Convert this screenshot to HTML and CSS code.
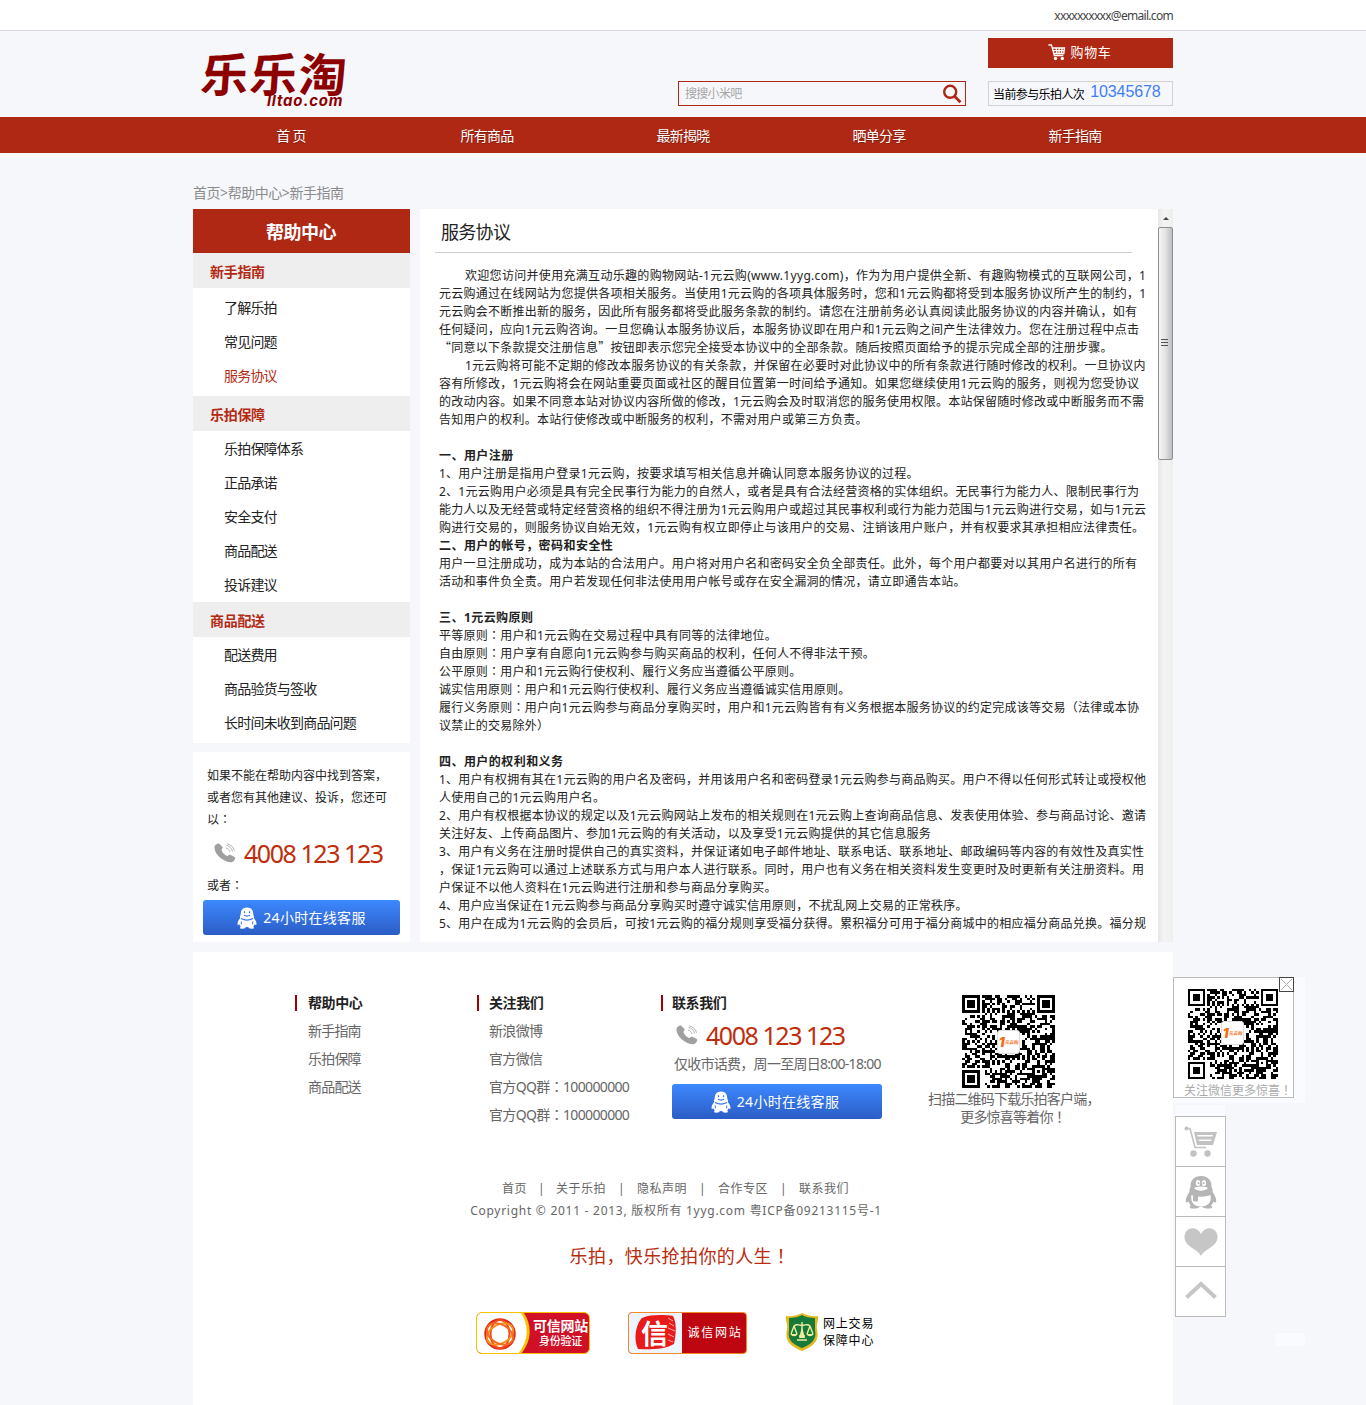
FILE: index.html
```html
<!DOCTYPE html>
<html lang="zh-CN">
<head>
<meta charset="utf-8">
<title>乐乐淘 - 服务协议</title>
<link rel="stylesheet" href="styles.css">
</head>
<body>
<svg class="defs" width="0" height="0" aria-hidden="true">
  <symbol id="qq" viewBox="0 0 32 34">
    <path fill="currentColor" d="M16 1C9 1 5.500 5.500 5.500 11c0 1.500-.8 2.500-1.200 4L4.500 17c-2.500 3-3.700 6.500-3.700 9 0 2 1.400 2 2.700.5C4 28 5 29.500 6 30.500c-2 1-2 3 2 3 4 0 6-.8 7-1.800h2c1 1 3 1.800 7 1.800s4-2 2-3c1-1 2-2.500 2.500-4 1.300 1.500 2.700 1.500 2.700-.5 0-2.500-1.200-6-3.700-9l.2-2c-.4-1.500-1.200-2.500-1.200-4C26.500 5.500 23 1 16 1z"/>
    <g class="qq-hole"><path d="M6.500 20c5 2.300 14 2.300 19 0 1.500 7-2.500 11.500-9.500 11.500S5 27 6.500 20z"/><ellipse cx="13" cy="8" rx="2.200" ry="3"/><ellipse cx="19" cy="8" rx="2.200" ry="3"/><path d="M9 13c4-2 10-2 14 0-3 3.500-11 3.500-14 0z"/></g>
    <path fill="currentColor" d="M8 20l5 1v5c-2 .8-4 .5-5 0z"/><circle cx="13.500" cy="8.300" r="1" fill="currentColor"/><circle cx="18.500" cy="8.300" r="1" fill="currentColor"/>
  </symbol>
  <symbol id="qq-white" viewBox="0 0 20 22">
    <path fill="#fff" d="M10 .5C6 .5 3.800 3.300 3.800 6.800c0 1.200-.6 1.800-.8 3L3.200 11C1.500 12.800.5 15 .5 17c0 1.300 1 1.200 1.800.3.300 1 .8 1.800 1.500 2.400-1.300.8-1 2 1.400 2 2.300 0 3.500-.5 4-1.200h1.600c.5.700 1.700 1.200 4 1.200 2.400 0 2.700-1.200 1.400-2 .7-.6 1.200-1.400 1.500-2.400.8.900 1.800 1 1.800-.3 0-2-1-4.200-2.700-6l.2-1.200c-.2-1.200-.8-1.800-.8-3C16.200 3.300 14 .5 10 .5z"/>
    <path d="M4 11.500c3.500 1.800 8.500 1.800 12 0M7.500 4.200v2M12.500 4.200v2M7 8.300c2 1 4 1 6 0" fill="none" stroke="#3a78e6" stroke-width="1.200"/>
    <path d="M4.300 14.500v3M15.700 14.500v3M8.500 20.500h3" stroke="#3a78e6" stroke-width="1"/>
  </symbol>
  <symbol id="phone" viewBox="0 0 22 20">
    <path fill="#a0a0a0" d="M.5 3.500C1.500 1.500 4 0 5.300.7L8.500 4c.8 1-1.300 2.500-1 3.300.8 2.500 3.500 5 5.500 5.700 1 .3 2.300-1.800 3.300-1.300l4.700 2.600c.8.700-.7 4-2.700 4.700C12 20.500-.5 12 .5 3.500z"/>
    <g fill="none" stroke="#b4b4b4"><path d="M12 5c2 .5 3.500 2 4 4"/><path d="M12.500 2.500c3 .5 5.300 2.500 6 6"/><path d="M13 .8c4 1 6.500 3 7.500 7"/></g>
  </symbol>
</svg>

<div class="topbar"><div class="wrap topbar-in">xxxxxxxxxx@email.com</div></div>

<header class="wrap header">
  <div class="logo"><span class="logo-cn">乐乐淘</span><span class="logo-en">lltao.com</span></div>
  <div class="search"><span>搜搜小米吧</span>
    <svg width="20" height="20" viewBox="0 0 20 20" fill="none" stroke="#ae2813"><circle cx="8.200" cy="7.800" r="6" stroke-width="2.400"/><path d="M12.500 12.200l6 6" stroke-width="2.800"/></svg>
  </div>
  <div class="head-right">
    <a class="cart"><svg width="18" height="17" viewBox="0 0 18 17"><path d="M.5 1h3l2.800 10.500h9M4.500 4h12L15.800 9.500H6M8 4l1 5.500M11 4v5.500M14 4l-.5 5.500M5 6.700h11" fill="none" stroke="#fff" stroke-width="1.300"/><circle cx="7.500" cy="14.500" r="1.700" fill="#fff"/><circle cx="14.300" cy="14.500" r="1.700" fill="#fff"/></svg>购物车</a>
    <div class="count"><span>当前参与乐拍人次</span><b>10345678</b></div>
  </div>
</header>

<nav class="nav"><div class="wrap nav-in"><a>首 页</a><a>所有商品</a><a>最新揭晓</a><a>晒单分享</a><a>新手指南</a></div></nav>

<div class="wrap crumb">首页&gt;帮助中心&gt;新手指南</div>

<div class="wrap content">
  <aside class="side">
    <div class="menu">
      <h2>帮助中心</h2>
      <h3>新手指南</h3>
      <ul class="first"><li>了解乐拍</li><li>常见问题</li><li class="on">服务协议</li></ul>
      <h3>乐拍保障</h3>
      <ul><li>乐拍保障体系</li><li>正品承诺</li><li>安全支付</li><li>商品配送</li><li>投诉建议</li></ul>
      <h3>商品配送</h3>
      <ul><li>配送费用</li><li>商品验货与签收</li><li>长时间未收到商品问题</li></ul>
    </div>
    <div class="help">
      <p>如果不能在帮助内容中找到答案，<br>或者您有其他建议、投诉，您还可<br>以<span class="mid">：</span></p>
      <div class="tel"><svg width="22" height="20"><use href="#phone"/></svg>4008 123 123</div>
      <p class="or">或者<span class="mid">：</span></p>
      <a class="service"><svg width="20" height="22"><use href="#qq-white"/></svg>24小时在线客服</a>
    </div>
  </aside>
  <main class="main">
    <article class="doc">
      <h1>服务协议</h1>
      <div class="text">
        <p class="ind open">欢迎您访问并使用充满互动乐趣的购物网站-1元云购(www.1yyg.com)，作为为用户提供全新、有趣购物模式的互联网公司，1</p>
        <p>元云购通过在线网站为您提供各项相关服务。当使用1元云购的各项具体服务时，您和1元云购都将受到本服务协议所产生的制约，1</p>
        <p>元云购会不断推出新的服务，因此所有服务都将受此服务条款的制约。请您在注册前务必认真阅读此服务协议的内容并确认，如有</p>
        <p>任何疑问，应向1元云购咨询。一旦您确认本服务协议后，本服务协议即在用户和1元云购之间产生法律效力。您在注册过程中点击</p>
        <p><span class="cjk">“</span>同意以下条款提交注册信息<span class="cjk">”</span>按钮即表示您完全接受本协议中的全部条款。随后按照页面给予的提示完成全部的注册步骤。</p>
        <p class="ind">1元云购将可能不定期的修改本服务协议的有关条款，并保留在必要时对此协议中的所有条款进行随时修改的权利。一旦协议内</p>
        <p>容有所修改，1元云购将会在网站重要页面或社区的醒目位置第一时间给予通知。如果您继续使用1元云购的服务，则视为您受协议</p>
        <p>的改动内容。如果不同意本站对协议内容所做的修改，1元云购会及时取消您的服务使用权限。本站保留随时修改或中断服务而不需</p>
        <p>告知用户的权利。本站行使修改或中断服务的权利，不需对用户或第三方负责。</p>
        <p class="gap"></p>
        <h4>一、用户注册</h4>
        <p>1、用户注册是指用户登录1元云购，按要求填写相关信息并确认同意本服务协议的过程。</p>
        <p>2、1元云购用户必须是具有完全民事行为能力的自然人，或者是具有合法经营资格的实体组织。无民事行为能力人、限制民事行为</p>
        <p>能力人以及无经营或特定经营资格的组织不得注册为1元云购用户或超过其民事权利或行为能力范围与1元云购进行交易，如与1元云</p>
        <p>购进行交易的，则服务协议自始无效，1元云购有权立即停止与该用户的交易、注销该用户账户，并有权要求其承担相应法律责任。</p>
        <h4>二、用户的帐号，密码和安全性</h4>
        <p>用户一旦注册成功，成为本站的合法用户。用户将对用户名和密码安全负全部责任。此外，每个用户都要对以其用户名进行的所有</p>
        <p>活动和事件负全责。用户若发现任何非法使用用户帐号或存在安全漏洞的情况，请立即通告本站。</p>
        <p class="gap"></p>
        <h4>三、1元云购原则</h4>
        <p>平等原则<span class="mid">：</span>用户和1元云购在交易过程中具有同等的法律地位。</p>
        <p>自由原则<span class="mid">：</span>用户享有自愿向1元云购参与购买商品的权利，任何人不得非法干预。</p>
        <p>公平原则<span class="mid">：</span>用户和1元云购行使权利、履行义务应当遵循公平原则。</p>
        <p>诚实信用原则<span class="mid">：</span>用户和1元云购行使权利、履行义务应当遵循诚实信用原则。</p>
        <p>履行义务原则<span class="mid">：</span>用户向1元云购参与商品分享购买时，用户和1元云购皆有有义务根据本服务协议的约定完成该等交易<span class="mid">（</span>法律或本协</p>
        <p>议禁止的交易除外<span class="mid">）</span></p>
        <p class="gap"></p>
        <h4>四、用户的权利和义务</h4>
        <p>1、用户有权拥有其在1元云购的用户名及密码，并用该用户名和密码登录1元云购参与商品购买。用户不得以任何形式转让或授权他</p>
        <p>人使用自己的1元云购用户名。</p>
        <p>2、用户有权根据本协议的规定以及1元云购网站上发布的相关规则在1元云购上查询商品信息、发表使用体验、参与商品讨论、邀请</p>
        <p>关注好友、上传商品图片、参加1元云购的有关活动，以及享受1元云购提供的其它信息服务</p>
        <p>3、用户有义务在注册时提供自己的真实资料，并保证诸如电子邮件地址、联系电话、联系地址、邮政编码等内容的有效性及真实性</p>
        <p>，保证1元云购可以通过上述联系方式与用户本人进行联系。同时，用户也有义务在相关资料发生变更时及时更新有关注册资料。用</p>
        <p>户保证不以他人资料在1元云购进行注册和参与商品分享购买。</p>
        <p>4、用户应当保证在1元云购参与商品分享购买时遵守诚实信用原则，不扰乱网上交易的正常秩序。</p>
        <p>5、用户在成为1元云购的会员后，可按1元云购的福分规则享受福分获得。累积福分可用于福分商城中的相应福分商品兑换。福分规</p>
      </div>
    </article>
    <div class="scroll"><div class="arrow"></div><div class="thumb"><i></i><i></i><i></i></div></div>
  </main>
</div>

<footer class="wrap footer">
  <div class="cols">
    <section class="c1"><h5>帮助中心</h5><p>新手指南</p><p>乐拍保障</p><p>商品配送</p></section>
    <section class="c2"><h5>关注我们</h5><p>新浪微博</p><p>官方微信</p><p>官方QQ群<span class="mid">：</span>100000000</p><p>官方QQ群<span class="mid">：</span>100000000</p></section>
    <section class="c3"><h5>联系我们</h5>
      <div class="tel"><svg width="22" height="20"><use href="#phone"/></svg>4008 123 123</div>
      <div class="hours">仅收市话费，周一至周日8:00-18:00</div>
      <a class="service"><svg width="20" height="22"><use href="#qq-white"/></svg>24小时在线客服</a>
    </section>
    <section class="c4"><div class="code"><svg class="qr" width="93" height="93" viewBox="0 0 37 37"></svg><span class="mark"><b>1</b><i>元云购</i></span></div><p>扫描二维码下载乐拍客户端，<br>更多惊喜等着你<span class="mid">！</span></p></section>
  </div>
  <div class="links"><a>首页</a><i>|</i><a>关于乐拍</a><i>|</i><a>隐私声明</a><i>|</i><a>合作专区</a><i>|</i><a>联系我们</a></div>
  <div class="copy">Copyright © 2011 - 2013, 版权所有 1yyg.com 粤ICP备09213115号-1</div>
  <div class="slogan">乐拍，快乐抢拍你的人生<span class="mid">！</span></div>
  <div class="badges">
    <div class="badge b1">
      <svg width="55" height="42" viewBox="0 0 55 42"><path d="M0 0h47c9 14 7 30-4 42H0z" fill="#f8c200"/><path d="M0 0h44c9 14 7 30-4 42H0z" fill="#fff"/><g fill="none" stroke-width="2"><circle cx="23" cy="21" r="14.500" stroke="#e22a1c" stroke-width="2.500"/><g stroke="#ef4a1b"><ellipse cx="23" cy="21" rx="9.500" ry="14"/><ellipse cx="23" cy="21" rx="9.500" ry="14" transform="rotate(60 23 21)" stroke="#f79018"/><ellipse cx="23" cy="21" rx="9.500" ry="14" transform="rotate(120 23 21)" stroke="#f26a1b"/></g></g><circle cx="23" cy="21" r="8" fill="#fff"/></svg>
      <span><b>可信网站</b><em>身份验证</em></span>
    </div>
    <div class="badge b2">
      <div class="seal"><svg width="43" height="36" viewBox="0 0 43 36"><path d="M8 3C17-1 32 0 39 1c4 8 3 18 1 28-8 5-24 6-36 5C-1 24 2 9 8 3z" fill="#e81a1a"/><path d="M34 3l5 3M35 8l5 3M34 13l7 3M34 19l6 3M34 25l5 2" stroke="#f7a9a6" fill="none"/></svg><b>信</b></div><span>诚信网站</span>
    </div>
    <div class="badge b3">
      <svg width="34" height="40" viewBox="0 0 34 40"><path d="M1 4c6 1 12-1 16-3 4 2 10 4 16 3 1 4-2 8-1 13 2 11-1 16-15 22C3 33 0 28 2 17 3 12 0 8 1 4z" fill="#e2b91e"/><path d="M4 6c5 0 10-1 13-3 3 2 8 3 13 3v12c2 9-3 14-13 18C7 32 2 27 4 18z" fill="#17793a"/><path d="M17 10v15M9 14c3-3 5 0 8-1 3 1 5-2 8 1M9 14l-3 8M9 14l3 8M25 14l-3 8M25 14l3 8M14 24h6M12 28h10" fill="none" stroke="#f0ec9b" stroke-width="1.400"/><path d="M5.500 22h7c-1 3-6 3-7 0zM21.500 22h7c-1 3-6 3-7 0zM17 15l3 11h-6z" fill="#f0ec9b"/></svg>
      <span>网上交易<br>保障中心</span>
    </div>
  </div>
</footer>

<div class="pop"><div class="pop-in">
  <div class="code small"><svg class="qr" width="90" height="90" viewBox="0 0 37 37"></svg><span class="mark"><b>1</b><i>元云购</i></span></div>
  <p>关注微信更多惊喜<span class="mid">！</span></p></div>
  <svg class="close" width="15" height="15" viewBox="0 0 15 15"><rect x=".5" y=".5" width="14" height="14" fill="#fff" stroke="#444"/><path d="M2 2l11 11M13 2L2 13" stroke="#aaa"/></svg>
</div>
<div class="tools">
  <a><svg width="34" height="32" viewBox="0 0 34 32"><path d="M2 2.500h4l5 19h11" fill="none" stroke="#c2c2c2" stroke-width="1.600"/><circle cx="2.500" cy="2.500" r="2" fill="#c2c2c2"/><path d="M10 6h23l-4 13H13zM13 9l.5 1.500h15L29 9zM14.500 13.500l.5 1.500h12l.5-1.500z" fill="#c2c2c2" fill-rule="evenodd"/><circle cx="9.500" cy="27.500" r="3.200" fill="#c2c2c2"/><circle cx="23.500" cy="27.500" r="3.200" fill="#c2c2c2"/></svg></a>
  <a><svg class="gray" width="32" height="34"><use href="#qq"/></svg></a>
  <a><svg width="34" height="28" viewBox="0 0 34 28"><path d="M17 28C14 21 .5 19 .5 9 .5-1 13-3 17 6c4-9 16.500-7 16.500 3C33.500 19 20 21 17 28z" fill="#c6c6c6"/></svg></a>
  <a><svg width="32" height="18" viewBox="0 0 32 18"><path d="M1.500 16.500L16 3l14.500 13.500" fill="none" stroke="#c6c6c6" stroke-width="4"/></svg></a>
</div>
<div class="hint"></div>
<script src="qr.js"></script>
</body>
</html>
```
FILE: styles.css
```css
* { box-sizing: border-box; }
body, h1, h2, h3, h4, h5, p, ul { margin: 0; padding: 0; }
li { list-style: none; }
i, em { font-style: normal; }
svg { display: block; flex: none; }
.defs { position: absolute; }
body { position: relative; background: #f6f7fb; color: #222; font: 14px/18px "Noto Sans", "Noto Sans CJK SC", sans-serif; height: 1405px; overflow: hidden; }
.wrap { width: 980px; margin: 0 auto; }
.cjk { font-family: "Noto Sans CJK SC", sans-serif; line-height: 1; }
.mid { font-family: "Noto Sans CJK TC", sans-serif; line-height: 1; }
.mid:lang(zh) { font-feature-settings: "locl" 0; }

.topbar { height: 31px; background: #fff; border-bottom: 1px solid #dadae4; }
.topbar-in { text-align: right; font-size: 12px; line-height: 31px; letter-spacing: -.7px; color: #444; }

.header { height: 86px; display: flex; align-items: flex-start; }
.logo { width: 485px; padding: 14px 0 0 8px; color: #8c0000; }
.logo-cn { display: block; font-size: 48px; line-height: 54px; font-weight: 700; height: 49px; transform: skewX(-4deg) scaleY(.96); transform-origin: left; font-family: "Noto Sans CJK SC", sans-serif; letter-spacing: 1px; }
.logo-en { display: block; padding-left: 66px; font: italic 700 15px/13px Inter, sans-serif; letter-spacing: .8px; }
.search { width: 288px; height: 25px; margin-top: 50px; border: 1px solid #ae2813; display: flex; justify-content: space-between; align-items: center; padding: 0 3px 0 6px; font-size: 12px; letter-spacing: -.7px; color: #a5a5a5; }
.head-right { width: 185px; margin: 7px 0 0 22px; }
.cart { display: flex; height: 30px; justify-content: center; align-items: center; gap: 5px; background: #ae2813; color: #fff; font-size: 13px; letter-spacing: .6px; padding: 0 2px 2px 0; }
.count { margin-top: 13px; height: 25px; border: 1px solid #d2d2d2; display: flex; padding-left: 4px; font-size: 12px; line-height: 25px; letter-spacing: -.6px; color: #000; }
.count b { margin-left: 6px; font: 16px/20px "Liberation Sans", sans-serif; letter-spacing: -.1px; color: #3f7efa; }

.nav { height: 36px; background: #ae2813; }
.nav-in { display: flex; color: #fff; line-height: 37px; letter-spacing: -.7px; text-shadow: 0 1px 1px rgba(0,0,0,.3); }
.nav-in a { flex: 1; text-align: center; }
.crumb { padding-top: 31px; height: 56px; letter-spacing: -.45px; color: #8b8b8b; }

.content { display: flex; justify-content: space-between; height: 733px; }
.side { width: 217px; display: flex; flex-direction: column; justify-content: space-between; }
.menu { background: #fff; height: 534px; letter-spacing: -.8px; }
.menu h2 { height: 44px; background: #ae2813; color: #fff; text-align: center; font-size: 18px; line-height: 46px; letter-spacing: -.5px; font-weight: 700; padding-right: 1px; }
.menu h3 { height: 35px; padding-left: 17px; background: #eee; color: #b32b14; font-size: 14px; line-height: 38px; letter-spacing: -.3px; }
.menu ul { padding: 1px 0 0 31px; }
.menu .first { padding: 3px 0 3px 31px; }
.menu li { line-height: 34px; height: 34px; }
.on { color: #b32b14; }
.help { height: 190px; background: #fff; padding: 13px 10px 0; }
.help p { padding-left: 4px; height: 66px; font-size: 12px; line-height: 22px; }
.help .or { height: 22px; }
.tel { display: flex; align-items: center; gap: 8px; color: #bf2e0c; font-size: 25px; letter-spacing: -1.45px; word-spacing: 0; white-space: nowrap; }
.help .tel { height: 44px; padding: 0 0 0 11px; }
.service { display: flex; align-items: center; justify-content: center; gap: 6px; height: 35px; border-radius: 3px; background: linear-gradient(#3d89ff, #2b5cc5); color: #fff; letter-spacing: .3px; }
.qq-hole { fill: #fff; }
.help .service { margin-top: 3px; }

.main { width: 753px; background: #fff; display: flex; justify-content: space-between; }
.doc { padding-left: 15px; }
.doc h1 { width: 697px; height: 44px; padding-left: 6px; border-bottom: 1px solid #ccc; font-size: 18px; line-height: 47px; font-weight: 400; letter-spacing: -.7px; }
.text { padding: 14px 0 0 4px; font-size: 12px; letter-spacing: .25px; white-space: nowrap; width: 720px; }
.text p, .text h4 { height: 18px; font-size: 12px; }
.text h4 { letter-spacing: .45px; }
.text .ind { padding-left: 26px; }
.text .open { letter-spacing: .31px; }
.scroll { width: 15px; background: linear-gradient(90deg, #e6e6e6, #f4f4f4 40%, #eee); }
.arrow { width: 0; margin: 8px 0 7px 5px; border: 3px solid transparent; border-top: 0; border-bottom-color: #444; }
.thumb { height: 233px; border: 1px solid #8e8e8e; border-radius: 2px; background: linear-gradient(90deg, #f6f6f6, #e2e2e4 50%, #bdbdc2); display: flex; flex-direction: column; justify-content: center; align-items: center; gap: 2px; padding: 0 2px 3px 0; }
.thumb i { width: 7px; height: 1px; background: #555; }

.footer { margin-top: 10px; height: 453px; background: #fff; }
.cols { display: flex; height: 223px; padding-top: 42px; color: #666; letter-spacing: -.8px; white-space: nowrap; }
.cols h5 { font-size: 14px; line-height: 18px; color: #222; letter-spacing: -.4px; position: relative; }
.cols h5::before { content: ""; position: absolute; left: -13px; top: 1px; width: 2px; height: 16px; background: #a30000; }
.cols .c2 h5::before { left: -12px; }
.cols .c3 h5::before { left: -11px; }
.cols p { margin-top: 10px; height: 18px; }
.c1 { margin-left: 115px; width: 181px; }
.c2 { width: 183px; letter-spacing: -.65px; }
.c3 { width: 210px; }
.c3 .tel { height: 32px; margin: 7px 0 0 4px; }
.hours { padding-left: 2px; height: 30px; line-height: 23px; letter-spacing: -.73px; margin-top: 1px; }
.c3 .service { margin-top: 2px; padding-right: 4px; }
.c4 { width: 170px; margin: 1px 0 0 46px; }
.code { position: relative; width: 93px; height: 93px; }
.c4 .code { margin-left: 34px; }
.qr { shape-rendering: crispEdges; }
.mark { position: absolute; left: 35px; top: 35px; width: 23px; height: 24px; border: 1px solid #ddd; border-radius: 3px; background: #fff; color: #f36b12; display: flex; align-items: center; justify-content: center; letter-spacing: 0; white-space: nowrap; }
.mark b { font: italic 900 13px/14px Inter, sans-serif; }
.mark i { font-size: 4.5px; font-weight: 700; line-height: 8px; transform: skewX(-8deg); }
.cols .c4 p { margin: 2px 0 0; height: 36px; text-align: center; }
.links { display: flex; justify-content: center; padding: 5px 15px 0 0; height: 27px; font-size: 12px; letter-spacing: .5px; color: #666; }
.links i { width: 29px; text-align: center; }
.links i:nth-of-type(n+2) { width: 31px; }
.copy { padding-right: 14px; text-align: center; font-size: 12px; letter-spacing: .73px; color: #666; }
.slogan { text-align: center; margin: 25px 6px 0 0; height: 24px; font-size: 18px; line-height: 22px; letter-spacing: .4px; color: #b92d0e; }
.badges { display: flex; margin: 43px 0 0 283px; }
.badge { height: 42px; display: flex; overflow: hidden; }
.b1 { width: 114px; border: 1px solid #f8c200; border-radius: 6px; background: #d01027; color: #fff; }
.b1 span { width: 58px; padding-top: 4px; text-align: center; white-space: nowrap; }
.b1 b { display: block; font-size: 14px; line-height: 18px; letter-spacing: -.3px; }
.b1 em { display: block; font-size: 11px; font-weight: 500; line-height: 12px; letter-spacing: -.3px; }
.b2 { width: 119px; margin-left: 38px; border: 1px solid #f58a2d; border-radius: 4px; background: #bd0610; color: #fff; }
.seal { position: relative; width: 53px; height: 40px; background: #eef4fd; padding: 2px 0 0 5px; }
.seal b { position: absolute; left: 12px; top: 7px; font-size: 27px; line-height: 27px; }
.b2 span { width: 64px; text-align: center; font-size: 12px; line-height: 40px; letter-spacing: 1.8px; padding-left: 2px; }
.b3 { margin-left: 38px; gap: 4px; color: #000; font-size: 12px; line-height: 17px; letter-spacing: .8px; }
.b3 span { padding-top: 3px; }

.pop { position: absolute; left: 1173px; top: 977px; width: 132px; height: 126px; background: #fafbfe; }
.pop-in { width: 121px; height: 121px; border: 1px solid #bbb; background: #fff; padding-top: 11px; }
.close { position: absolute; left: 106px; top: 0; }
.small { width: 90px; height: 90px; margin-left: 14px; }
.small .mark { left: 33px; top: 32px; }
.pop p { margin: 4px 0 0 10px; height: 16px; font-size: 12px; line-height: 16px; color: #aaa; white-space: nowrap; }
.tools { position: absolute; left: 1175px; top: 1116px; width: 51px; border: 1px solid #bbb; background: #fff; box-shadow: 0 -12px 0 -1px #fafbfe; }
.tools a { display: flex; height: 50px; align-items: center; justify-content: center; border-bottom: 1px solid #bbb; }
.tools a:last-child { height: 49px; border: 0; padding-bottom: 4px; }
.gray { color: #b5b5b5; }
.hint { position: absolute; left: 1275px; top: 1333px; width: 30px; height: 13px; background: #fafbfe; }
```
FILE: qr.js
```js
// Fills each .qr svg with a 37-module code: finder corners, timing lines, data field.
const N = 37;
let seed = 20131;
const rnd = () => (seed = (seed * 1103515245 + 12345) % 2147483648) / 2147483648;
const ring = (x, y, cx, cy) => Math.max(Math.abs(x - cx), Math.abs(y - cy));
let d = "";
for (let y = 0; y < N; y++) {
  for (let x = 0; x < N; x++) {
    let on = rnd() < 0.52;
    for (const [cx, cy] of [[3, 3], [N - 4, 3], [3, N - 4]]) {
      const r = ring(x, y, cx, cy);
      if (r <= 4) on = r === 3 || r <= 1;
    }
    const a = ring(x, y, 30, 30);
    if (a <= 2) on = a !== 1;
    if ((y === 6 && x > 7 && x < 29) || (x === 6 && y > 7 && y < 29)) on = (x + y) % 2 === 0;
    if (on) d += `M${x} ${y}h1v1h-1z`;
  }
}
document.querySelectorAll(".qr").forEach(s => { s.innerHTML = `<path d="${d}"/>`; });
```
